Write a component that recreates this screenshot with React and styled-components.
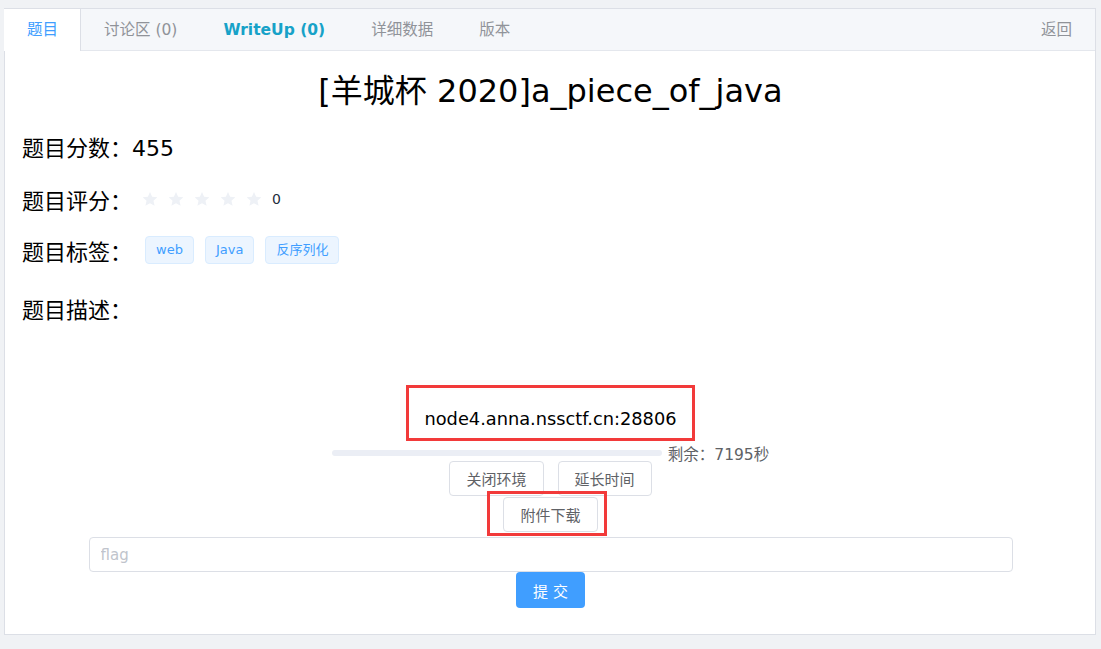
import React from "react";
import styled, { createGlobalStyle } from "styled-components";

const GlobalStyle = createGlobalStyle`
  html, body { margin: 0; padding: 0; background: #f0f2f5; }
  body { font-family: "DejaVu Sans", "Noto Sans CJK SC", sans-serif; }
  * { box-sizing: border-box; }
`;

const Page = styled.div`
  padding: 8px 5px 15px 4px;
`;

const Card = styled.div`
  background: #fff;
  border: 1px solid #dcdfe6;
`;

const TabHeader = styled.div`
  display: flex;
  align-items: flex-start;
  height: 42px;
  background: #f5f7fa;
  border-bottom: 1px solid #e4e7ed;
`;

const Tab = styled.div`
  height: ${(p) => (p.$active ? "42px" : "41px")};
  line-height: 42px;
  padding: 0 22px;
  font-size: 15.5px;
  border-left: 1px solid transparent;
  border-right: 1px solid ${(p) => (p.$active ? "#dcdfe6" : "transparent")};
  background: ${(p) => (p.$active ? "#fff" : "transparent")};
  color: ${(p) => (p.$active ? "#409eff" : p.$accent ? "#17a2c8" : "#909399")};
  font-weight: ${(p) => (p.$accent ? "bold" : "normal")};
  margin-left: ${(p) => (p.$first ? "-1px" : p.$right ? "auto" : "0")};
  white-space: nowrap;
`;

const Content = styled.div`
  padding: 0 16px 26px 17px;
`;

const Title = styled.h1`
  margin: 20px 0 0;
  font-size: 32px;
  line-height: 40px;
  font-weight: normal;
  text-align: center;
  color: #000;
`;

const InfoRow = styled.div`
  display: flex;
  align-items: center;
  height: 36px;
  margin-top: ${(p) => p.$mt}px;
`;

const Label = styled.span`
  font-size: 22px;
  color: #000;
  white-space: nowrap;
`;

const Stars = styled.div`
  display: flex;
  align-items: center;
  gap: 10px;
  margin-left: 10px;
`;

const RateText = styled.span`
  margin-left: 10px;
  font-size: 14px;
  color: #1f2d3d;
`;

const Tags = styled.div`
  display: flex;
  gap: 11px;
  margin-left: 13px;
`;

const Tag = styled.span`
  height: 28px;
  line-height: 26px;
  padding: 0 10px;
  font-size: 13px;
  color: #409eff;
  background: #ecf5ff;
  border: 1px solid #d9ecff;
  border-radius: 4px;
`;

const NodeBox = styled.div`
  width: fit-content;
  margin: 59px auto 0;
  border: 3px solid #f23a3a;
  padding: 20px 15px 8px;
  font-size: 17.8px;
  line-height: 22px;
  color: #000;
`;

const ProgressRow = styled.div`
  display: flex;
  justify-content: center;
  align-items: center;
  gap: 6px;
  height: 17px;
  margin-top: 3px;
`;

const Bar = styled.div`
  width: 330px;
  height: 6px;
  border-radius: 3px;
  background: #ebeef5;
`;

const Remain = styled.span`
  font-size: 15.5px;
  color: #606266;
  white-space: nowrap;
`;

const ButtonRow = styled.div`
  display: flex;
  justify-content: center;
  gap: 14px;
  margin-top: ${(p) => p.$mt || 0}px;
`;

const Button = styled.button`
  position: relative;
  height: 35px;
  padding: 0 16px;
  font-family: inherit;
  font-size: 15px;
  color: #606266;
  background: #fff;
  border: 1px solid #dcdfe6;
  border-radius: 4px;
`;

const Highlight = styled.span`
  position: absolute;
  left: -17px;
  right: -10px;
  top: -7px;
  bottom: -5px;
  border: 3px solid #f23a3a;
  pointer-events: none;
`;

const FlagInput = styled.input`
  display: block;
  width: 924px;
  height: 35px;
  margin: 5px auto 0;
  padding: 0 11px;
  font-family: inherit;
  font-size: 15px;
  color: #606266;
  border: 1px solid #dcdfe6;
  border-radius: 4px;
  outline: none;
  &::placeholder { color: #c0c4cc; }
`;

const Submit = styled.button`
  display: block;
  margin: 0 auto;
  height: 36px;
  padding: 0 17px;
  font-family: inherit;
  font-size: 15px;
  color: #fff;
  background: #409eff;
  border: none;
  border-radius: 4px;
`;

const Star = () => (
  <svg width="16" height="16" viewBox="0 0 24 24">
    <path
      d="M12 1.5l3.2 7.1 7.8.8-5.8 5.2 1.7 7.7L12 18.4l-6.9 3.9 1.7-7.7L1 9.4l7.8-.8z"
      fill="#eef1f6"
    />
  </svg>
);

export default function App() {
  return (
    <>
      <GlobalStyle />
      <Page>
        <Card>
          <TabHeader>
            <Tab $active $first>题目</Tab>
            <Tab>讨论区 (0)</Tab>
            <Tab $accent>WriteUp (0)</Tab>
            <Tab>详细数据</Tab>
            <Tab>版本</Tab>
            <Tab $right>返回</Tab>
          </TabHeader>
          <Content>
            <Title>[羊城杯 2020]a_piece_of_java</Title>
            <InfoRow $mt={17}>
              <Label>题目分数：455</Label>
            </InfoRow>
            <InfoRow $mt={17}>
              <Label>题目评分：</Label>
              <Stars>
                {[0, 1, 2, 3, 4].map((i) => (
                  <Star key={i} />
                ))}
              </Stars>
              <RateText>0</RateText>
            </InfoRow>
            <InfoRow $mt={15}>
              <Label>题目标签：</Label>
              <Tags>
                <Tag>web</Tag>
                <Tag>Java</Tag>
                <Tag>反序列化</Tag>
              </Tags>
            </InfoRow>
            <InfoRow $mt={22}>
              <Label>题目描述：</Label>
            </InfoRow>
            <NodeBox>node4.anna.nssctf.cn:28806</NodeBox>
            <ProgressRow>
              <Bar />
              <Remain>剩余：7195秒</Remain>
            </ProgressRow>
            <ButtonRow>
              <Button>关闭环境</Button>
              <Button>延长时间</Button>
            </ButtonRow>
            <ButtonRow $mt={1}>
              <Button>
                附件下载
                <Highlight />
              </Button>
            </ButtonRow>
            <FlagInput placeholder="flag" />
            <Submit>提 交</Submit>
          </Content>
        </Card>
      </Page>
    </>
  );
}
